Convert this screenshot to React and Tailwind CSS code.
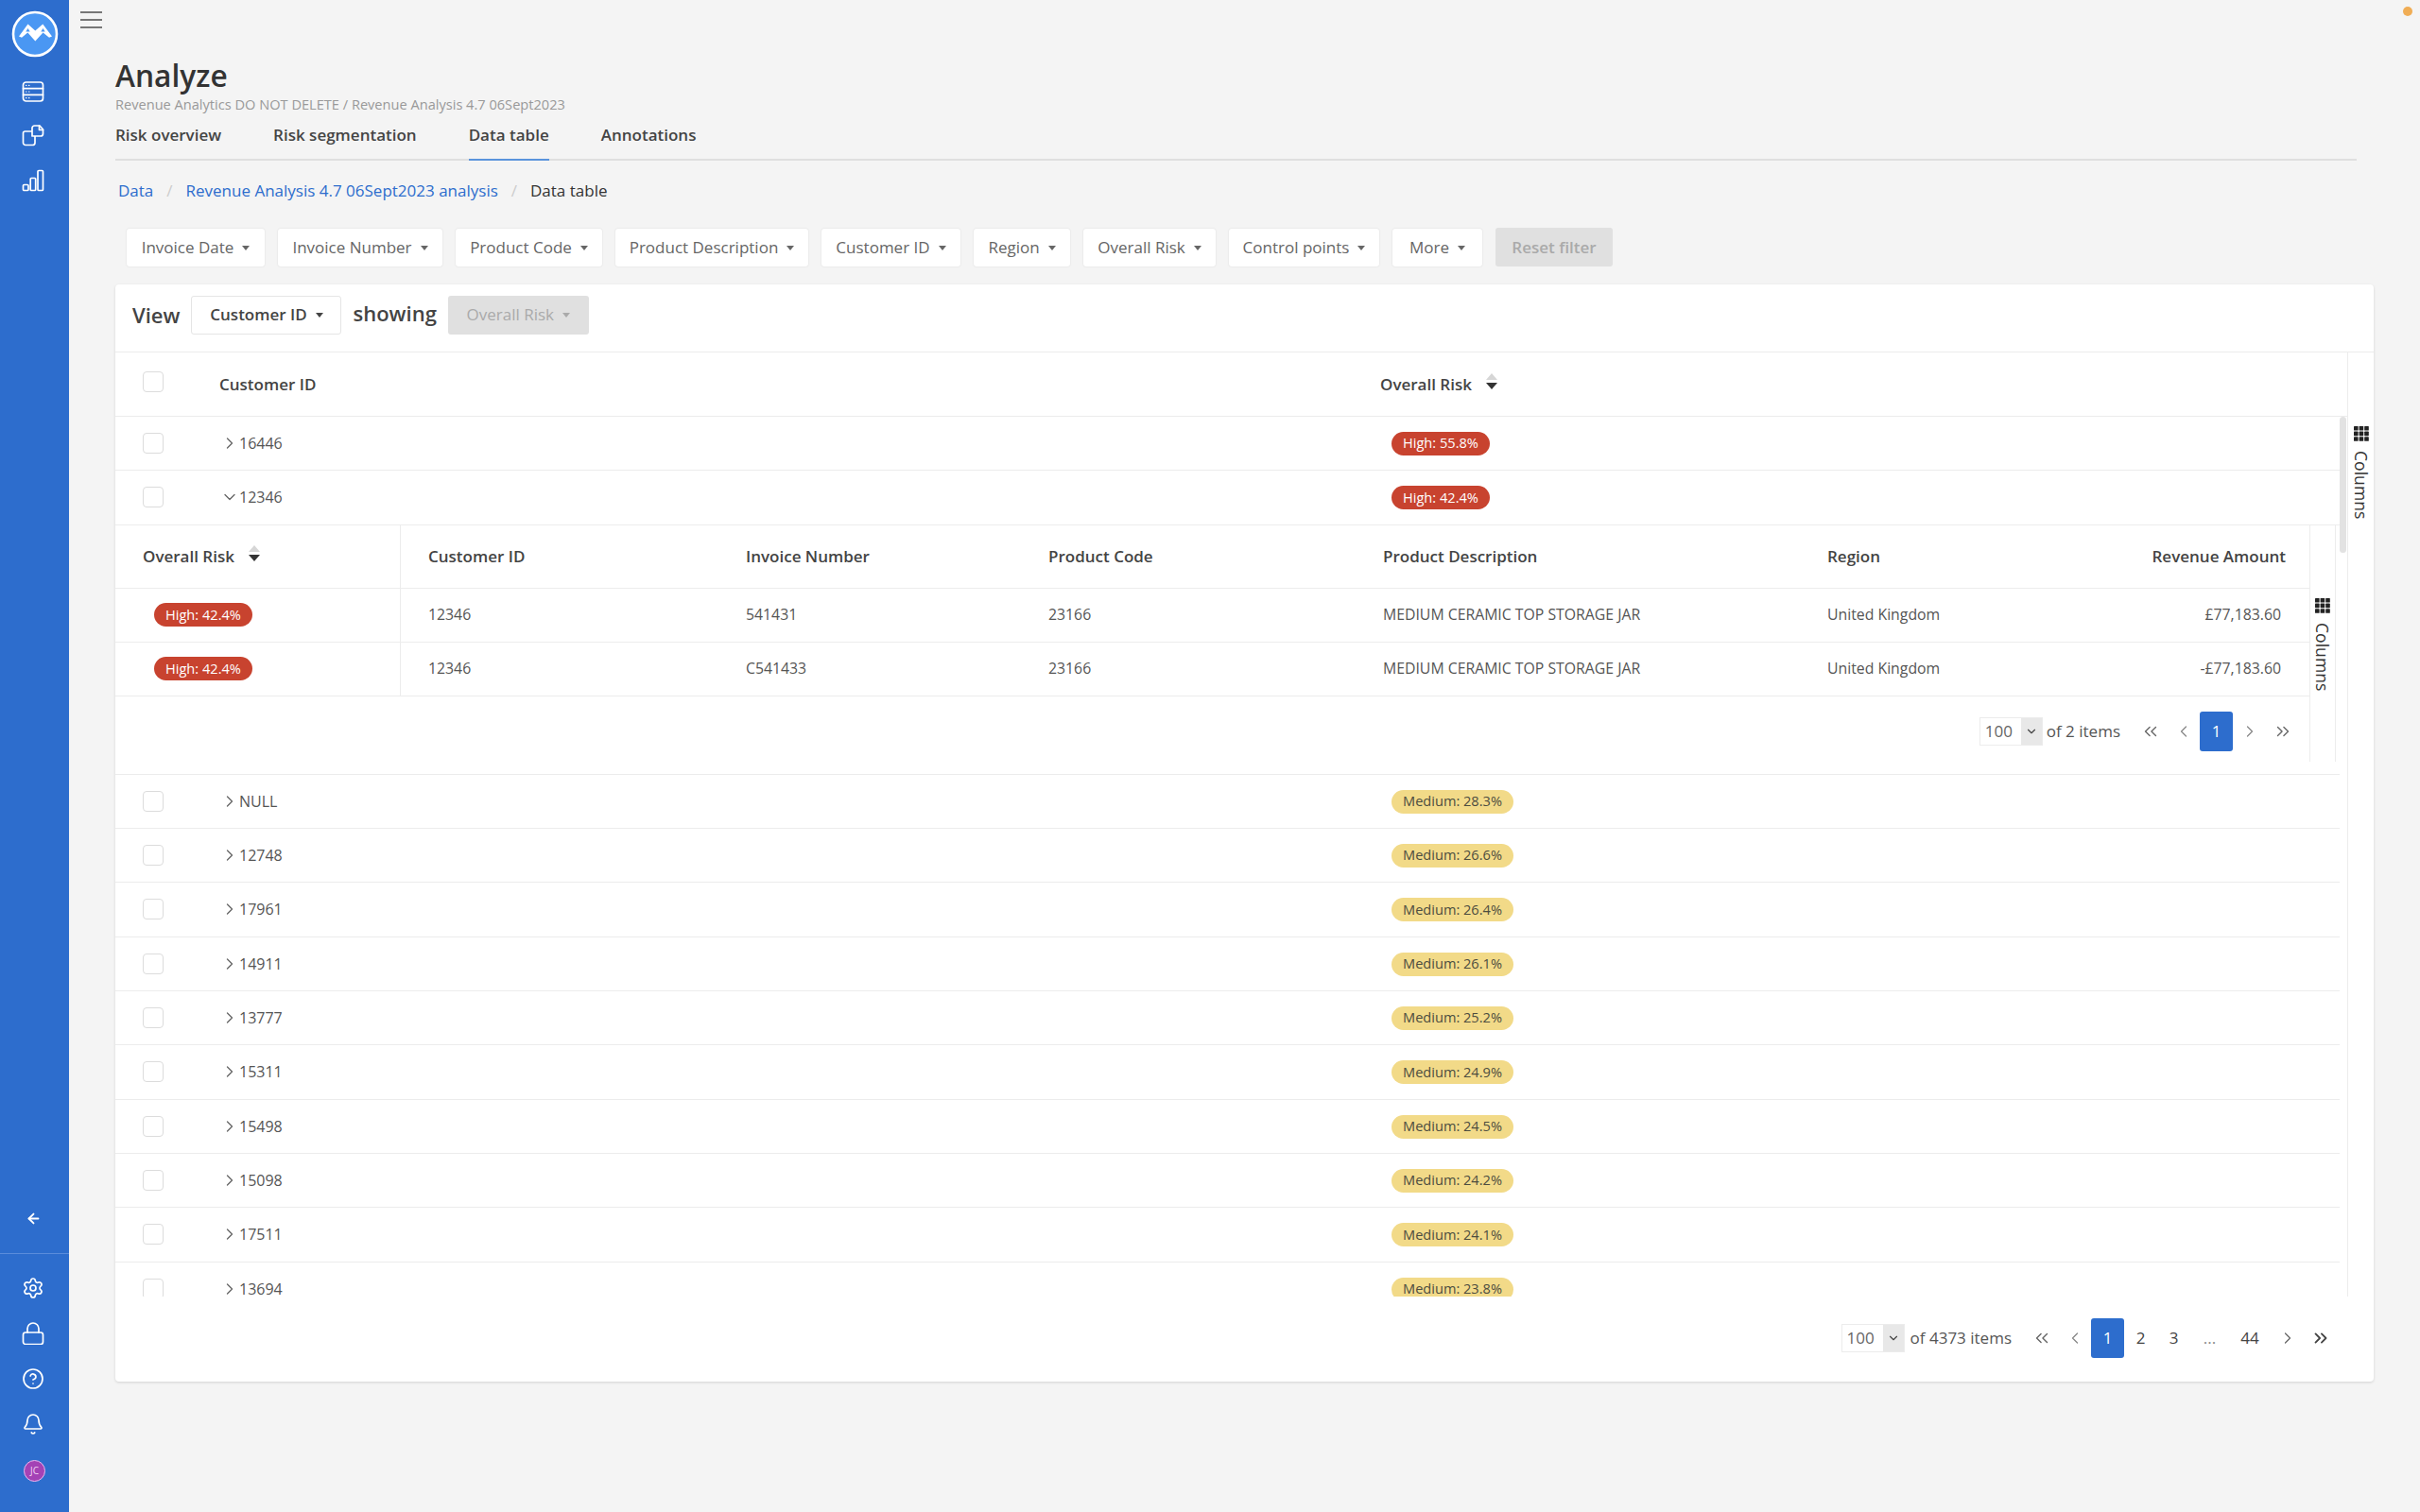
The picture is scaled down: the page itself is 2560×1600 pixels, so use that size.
import React from "react";
import { Settings, CircleHelp, Bell, ArrowLeft, ChevronRight, ChevronDown, ChevronLeft, ChevronsLeft, ChevronsRight } from "lucide-react";

const Caret = ({ className = "" }) => (
  <svg width="8" height="5" viewBox="0 0 8 5" className={className}><path d="M0 0h8L4 5z" fill="currentColor" /></svg>
);

const Sort = () => (
  <svg width="12" height="17" viewBox="0 0 12 17" className="-mt-[6px] block">
    <path d="M6 0l6 7H0z" fill="#d6d6d6" />
    <path d="M0 10h12l-6 7z" fill="#333" />
  </svg>
);

const GridIcon = () => (
  <svg width="16" height="16" viewBox="0 0 16 16" className="block" fill="#222">
    {[0, 5.6, 11.2].map((y) => [0, 5.6, 11.2].map((x) => <rect key={`${x}-${y}`} x={x} y={y} width="4.6" height="4.6" rx="0.6" />))}
  </svg>
);

const Logo = () => (
  <svg width="50" height="50" viewBox="0 0 50 50" className="block">
    <circle cx="25" cy="25" r="23" fill="#4a97f3" stroke="#fff" strokeWidth="2.6" />
    <path d="M8 27.5L17.5 14.5l7.8 7 8-7L43 27.5l-3 1.3-6.5-5.3-8.2 9-8-9-6.3 5.3z" fill="#fff" />
    <path d="M15.3 22.5h4.4l-2.2-3.4zM31.3 22.5h4.4l-2.2-3.4z" fill="#4a97f3" />
  </svg>
);

const SvgIcon = ({ children }) => (
  <svg width="24" height="24" viewBox="0 0 24 24" fill="none" stroke="#fff" strokeWidth="1.7" strokeLinecap="round" strokeLinejoin="round" className="block">{children}</svg>
);

const ServerIcon = () => (
  <SvgIcon>
    <rect x="1.5" y="2" width="21" height="20" rx="3" />
    <path d="M1.5 8.7h21M1.5 15.3h21" />
    <path d="M4.5 5.3h.5M7.5 5.3h.5M4.5 12h.5M7.5 12h.5M4.5 18.7h.5M7.5 18.7h.5" strokeWidth="1.2" />
  </SvgIcon>
);

const FilesIcon = () => (
  <SvgIcon>
    <path d="M11 7H3.5a2 2 0 0 0-2 2v10a2.5 2.5 0 0 0 2.5 2.5h7.5A2.5 2.5 0 0 0 14 19v-7h6a2.5 2.5 0 0 0 2.5-2.5V5l-3.5-4h-5.5A2.5 2.5 0 0 0 11 3.5V12h3" />
    <path d="M18.5 1v4.5h4" />
  </SvgIcon>
);

const BarsIcon = () => (
  <SvgIcon>
    <rect x="1.5" y="16.5" width="5.5" height="6" rx="1" />
    <rect x="9.2" y="9.5" width="5.5" height="13" rx="1" />
    <rect x="17" y="1.5" width="5.5" height="21" rx="1" />
  </SvgIcon>
);

const LockIcon = () => (
  <SvgIcon>
    <rect x="1.5" y="11" width="21" height="12.5" rx="2.5" />
    <path d="M6 11V7a6 6 0 0 1 12 0v4" />
  </SvgIcon>
);

const Sidebar = () => (
  <aside className="flex h-[1600px] w-[73px] shrink-0 flex-col items-center bg-[#2d6dcd]">
    <div className="mt-[11px]"><Logo /></div>
    <div className="-ml-[3px] mt-[24px]"><ServerIcon /></div>
    <div className="-ml-[3px] mt-[23px]"><FilesIcon /></div>
    <div className="-ml-[3px] mt-[23px]"><BarsIcon /></div>
    <div className="-ml-[3px] mb-[28px] mt-auto"><ArrowLeft size={17} color="#fff" strokeWidth={2.6} /></div>
    <div className="h-px w-full bg-[#5a8cdb]" />
    <div className="-ml-[3px] mt-[24px]"><Settings size={24} color="#fff" strokeWidth={1.7} /></div>
    <div className="-ml-[3px] mt-[24px]"><LockIcon /></div>
    <div className="-ml-[3px] mt-[24px]"><CircleHelp size={24} color="#fff" strokeWidth={1.7} /></div>
    <div className="-ml-[3px] mt-[24px]"><Bell size={24} color="#fff" strokeWidth={1.7} /></div>
    <div className="mb-[32px] mt-[26px] flex h-[23px] w-[23px] items-center justify-center rounded-full border border-[#e9b8ef] bg-[#a442b5] text-[10px] text-[#f0d2f4]">JC</div>
  </aside>
);

const filters = [
  ["Invoice Date", "w-[146px]"],
  ["Invoice Number", "w-[174px]"],
  ["Product Code", "w-[155px]"],
  ["Product Description", "w-[204px]"],
  ["Customer ID", "w-[147px]"],
  ["Region", "w-[102px]"],
  ["Overall Risk", "w-[140px]"],
  ["Control points", "w-[159px]"],
  ["More", "w-[95px]"],
];

const FilterBtn = ({ label, w }) => (
  <div className={`flex h-[40px] items-center justify-center gap-[9px] rounded-[3px] bg-white text-[17px] text-[#666] shadow-[0_0_2px_rgba(0,0,0,0.13)] ${w}`}>
    <span>{label}</span>
    <Caret />
  </div>
);

const Checkbox = ({ className = "" }) => <div className={`h-[22px] w-[22px] shrink-0 rounded-[4px] border border-[#dcdcdc] bg-white ${className}`} />;

const Badge = ({ tone, children }) => (
  <span className={`inline-flex h-[25px] items-center justify-center rounded-full px-[12px] text-[14.6px] ${tone === "high" ? "bg-[#c8432f] text-white" : "bg-[#f2da88] text-[#4d4d40]"}`}>
    {children}
  </span>
);

const Row = ({ id, tone, value, open }) => (
  <div className="flex h-[57.33px] items-center border-b border-[#ececec]">
    <div className="w-[110px] pl-[29px]"><Checkbox /></div>
    <div className="flex w-[1229px] items-center text-[16px] text-[#555]">
      <span className="ml-px flex w-[20px] justify-center text-[#666]">
        {open ? <ChevronDown size={20} strokeWidth={1.6} /> : <ChevronRight size={20} strokeWidth={1.6} />}
      </span>
      <span>{id}</span>
    </div>
    <div className="pl-[11px]"><Badge tone={tone}>{value}</Badge></div>
  </div>
);

const NestedCells = ({ risk, customer, invoice, code, desc, region, rev }) => (
  <div className="flex h-[57px] items-center border-b border-[#ececec] text-[15.8px] text-[#555]">
    <div className="flex h-full w-[302px] shrink-0 items-center border-r border-[#ececec] pl-[41px]"><Badge tone="high">{risk}</Badge></div>
    <div className="w-[365px] shrink-0 pl-[29px]">{customer}</div>
    <div className="w-[320px] shrink-0">{invoice}</div>
    <div className="w-[354px] shrink-0">{code}</div>
    <div className="w-[470px] shrink-0">{desc}</div>
    <div className="w-[200px] shrink-0">{region}</div>
    <div className="flex-1 pr-[30px] text-right">{rev}</div>
  </div>
);

const PageSelect = () => (
  <div className="flex h-[30px] w-[67px] items-stretch border border-[#ececec] bg-white">
    <span className="flex-1 pl-[5px] text-[17px] leading-[28px] text-[#666]">100</span>
    <span className="flex w-[22px] items-center justify-center bg-[#e8e8e8] text-[#444]"><ChevronDown size={14} strokeWidth={2} /></span>
  </div>
);

const PageBtn = ({ children, active, className = "w-[35px]" }) => (
  <span className={`flex h-[42px] items-center justify-center rounded-[3px] text-[17px] ${active ? "bg-[#2d6dcd] text-white" : "text-[#444]"} ${className}`}>
    {children}
  </span>
);

const Columns = () => (
  <div className="flex flex-col items-center">
    <GridIcon />
    <span className="mt-[10px] text-[17.6px] leading-[22px] text-[#333] [writing-mode:vertical-rl]">Columns</span>
  </div>
);

const medium = [
  ["NULL", "28.3"], ["12748", "26.6"], ["17961", "26.4"], ["14911", "26.1"], ["13777", "25.2"],
  ["15311", "24.9"], ["15498", "24.5"], ["15098", "24.2"], ["17511", "24.1"], ["13694", "23.8"],
];

export default function App() {
  return (
    <div className="flex h-[1600px] w-full overflow-hidden bg-[#f4f4f4] font-['Open_Sans',sans-serif]">
      <Sidebar />
      <main className="relative min-w-0 flex-1">
        <div className="absolute right-[8px] top-[7px] h-[10px] w-[10px] rounded-full bg-[#f0ad55]" />
        <div className="h-[60px] pl-[12px] pt-[12px]">
          <div className="flex w-[23px] flex-col gap-[6px]">
            <span className="h-[2px] bg-[#777]" /><span className="h-[2px] bg-[#777]" /><span className="h-[2px] bg-[#777]" />
          </div>
        </div>

        <div className="ml-[49px] mr-[49px]">
          <h1 className="text-[31.7px] font-semibold leading-[40px] text-[#333]">Analyze</h1>
          <p className="text-[14.6px] leading-[20px] text-[#999]">Revenue Analytics DO NOT DELETE / Revenue Analysis 4.7 06Sept2023</p>

          <div className="mr-[18px] flex h-[50px] gap-[55px] border-b-2 border-[#dfdfdf]">
            {["Risk overview", "Risk segmentation", "Data table", "Annotations"].map((t) => (
              <div key={t} className={`-mb-[2px] h-[50px] pt-[11px] text-[17px] font-semibold leading-[24px] text-[#444] ${t === "Data table" ? "border-b-2 border-[#5a94dc]" : ""}`}>{t}</div>
            ))}
          </div>

          <div className="mt-[20px] flex items-center pl-[3px] text-[17px] leading-[24px]">
            <span className="text-[#2d6dcd]">Data</span>
            <span className="mx-[14px] text-[#ccc]">/</span>
            <span className="text-[#2d6dcd]">Revenue Analysis 4.7 06Sept2023 analysis</span>
            <span className="mx-[14px] text-[#ccc]">/</span>
            <span className="text-[#333]">Data table</span>
          </div>

          <div className="mt-[28px] flex gap-[14px] pl-[12px]">
            {filters.map(([l, w]) => <FilterBtn key={l} label={l} w={w} />)}
            <div className="-mt-px flex h-[41px] w-[124px] items-center justify-center rounded-[3px] bg-[#e0e0e0] text-[17px] font-semibold text-[#aaa]">Reset filter</div>
          </div>

          <section className="mt-[19px] rounded-[4px] bg-white shadow-[0_1px_3px_rgba(0,0,0,0.14)]">
            <div className="flex h-[72px] items-center border-b border-[#ececec] pb-[7px] pl-[18px]">
              <span className="text-[22px] font-semibold text-[#444]">View</span>
              <div className="ml-[12px] flex h-[41px] w-[159px] items-center justify-center gap-[9px] rounded-[3px] border border-[#e5e5e5] text-[17px] font-semibold text-[#444]">
                Customer ID <Caret />
              </div>
              <span className="-mt-[3px] ml-[12px] text-[22px] font-semibold text-[#444]">showing</span>
              <div className="ml-[12px] flex h-[41px] w-[149px] items-center justify-center gap-[9px] rounded-[3px] bg-[#e0e0e0] text-[17px] text-[#aaa]">
                Overall Risk <Caret />
              </div>
            </div>

            <div className="flex h-[999px]">
              <div className="relative min-w-0 flex-1">
                <div className="flex h-[68px] items-center border-b border-[#ececec] text-[17px] font-semibold text-[#444]">
                  <div className="w-[110px] pl-[29px]"><Checkbox className="-mt-[5px]" /></div>
                  <div className="w-[1228px]">Customer ID</div>
                  <div className="flex items-center gap-[15px]">Overall Risk <Sort /></div>
                </div>

                <div className="relative h-[931px] overflow-hidden">
                  <div className="mr-[8px]">
                    <Row id="16446" tone="high" value="High: 55.8%" />
                    <Row id="12346" tone="high" value="High: 42.4%" open />

                    <div className="border-b border-[#ececec] pb-[13px] pr-[4px]">
                      <div className="flex">
                        <div className="min-w-0 flex-1">
                          <div className="flex h-[67px] items-center border-b border-[#ececec] text-[17px] font-semibold text-[#444]">
                            <div className="flex h-full w-[302px] shrink-0 items-center gap-[15px] border-r border-[#ececec] pl-[29px]">Overall Risk <Sort /></div>
                            <div className="w-[365px] shrink-0 pl-[29px]">Customer ID</div>
                            <div className="w-[320px] shrink-0">Invoice Number</div>
                            <div className="w-[354px] shrink-0">Product Code</div>
                            <div className="w-[470px] shrink-0">Product Description</div>
                            <div className="w-[200px] shrink-0">Region</div>
                            <div className="flex-1 pr-[25px] text-right">Revenue Amount</div>
                          </div>
                          <NestedCells risk="High: 42.4%" customer="12346" invoice="541431" code="23166" desc="MEDIUM CERAMIC TOP STORAGE JAR" region="United Kingdom" rev="£77,183.60" />
                          <NestedCells risk="High: 42.4%" customer="12346" invoice="C541433" code="23166" desc="MEDIUM CERAMIC TOP STORAGE JAR" region="United Kingdom" rev="-£77,183.60" />
                          <div className="flex h-[69px] items-center justify-end pr-[11px] pt-[5px] text-[17px] text-[#555]">
                            <PageSelect />
                            <span className="ml-[4px] mr-[14px]">of 2 items</span>
                            <PageBtn className="w-[35px] text-[#666]"><ChevronsLeft size={22} strokeWidth={1.5} /></PageBtn>
                            <PageBtn className="w-[35px] text-[#888]"><ChevronLeft size={20} strokeWidth={1.5} /></PageBtn>
                            <PageBtn active>1</PageBtn>
                            <PageBtn className="w-[35px] text-[#888]"><ChevronRight size={20} strokeWidth={1.5} /></PageBtn>
                            <PageBtn className="w-[35px] text-[#666]"><ChevronsRight size={22} strokeWidth={1.5} /></PageBtn>
                          </div>
                        </div>
                        <div className="w-[28px] shrink-0 border-x border-[#ececec] pt-[77px]"><Columns /></div>
                      </div>
                    </div>

                    {medium.map(([id, v]) => <Row key={id} id={id} tone="medium" value={`Medium: ${v}%`} />)}
                  </div>
                  <div className="absolute right-[1px] top-0 h-[144px] w-[7px] rounded-[4px] bg-[#e2e2e2]" />
                </div>
              </div>
              <div className="w-[28px] shrink-0 border-l border-[#ececec] pt-[78px]"><Columns /></div>
            </div>

            <div className="flex h-[90px] items-center justify-end pb-[2px] pr-[39px] text-[17px] text-[#555]">
              <PageSelect />
              <span className="ml-[6px] mr-[14px]">of 4373 items</span>
              <PageBtn className="w-[35px] text-[#666]"><ChevronsLeft size={22} strokeWidth={1.5} /></PageBtn>
              <PageBtn className="w-[35px] text-[#888]"><ChevronLeft size={20} strokeWidth={1.5} /></PageBtn>
              <PageBtn active>1</PageBtn>
              <PageBtn>2</PageBtn>
              <PageBtn>3</PageBtn>
              <PageBtn className="w-[41px] text-[#888]">...</PageBtn>
              <PageBtn className="w-[44px]">44</PageBtn>
              <PageBtn className="w-[35px] text-[#666]"><ChevronRight size={20} strokeWidth={1.5} /></PageBtn>
              <PageBtn className="w-[35px] text-[#222]"><ChevronsRight size={22} strokeWidth={2} /></PageBtn>
            </div>
          </section>
        </div>
      </main>
    </div>
  );
}
